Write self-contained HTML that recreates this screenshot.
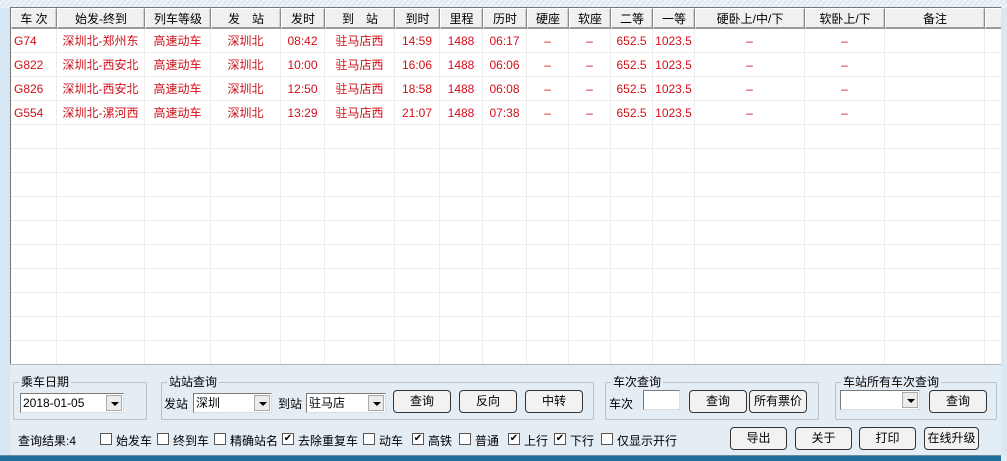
<!DOCTYPE html><html><head><meta charset="utf-8"><style>
*{margin:0;padding:0;box-sizing:border-box}
body{width:1007px;height:461px;overflow:hidden;position:relative;background:#e4ecf4;font-family:"Liberation Sans","Noto Sans CJK SC",sans-serif;font-size:12px;color:#000}
.a{position:absolute}
#top{left:0;top:0;width:1007px;height:8px;background:repeating-linear-gradient(135deg,#dfe9f3 0 2px,#eef4fa 2px 4px)}
#grid{left:10px;top:7px;width:991px;height:358px;background:#fff;border-left:1px solid #777;border-top:1px solid #777;overflow:hidden}
table{border-collapse:separate;border-spacing:0;table-layout:fixed;position:absolute;left:0;top:0;width:991px}
th{height:21px;background:#f0f0f0;font-weight:normal;border-right:1px solid #8a8a8a;border-bottom:2px solid #9a9a9a;border-left:1px solid #fff;border-top:1px solid #fff;font-size:12px;padding:0;box-shadow:inset -1px 0 0 #d0d0d0}
td{height:24px;border-right:1px solid #ececec;border-bottom:1px solid #ececec;text-align:center;color:#d0101a;padding:0;white-space:nowrap}
td.l{text-align:left;padding-left:3px}
fieldset{position:absolute;border:1px solid #b8c2cc;border-radius:2px}
.lg{position:absolute;background:#e4ecf4;padding:0 2px;font-size:12px;line-height:13px}
.cb{position:absolute;height:20px;background:#fff;border:1px solid #7a7a7a;border-right-color:#ddd;border-bottom-color:#ddd;font-size:12px;line-height:18px;padding-left:2px}
.cb i{position:absolute;right:1px;top:1px;width:16px;height:16px;background:#ececec;border:1px solid #aaa}
.cb i:after{content:"";position:absolute;left:4px;top:6px;border-left:4px solid transparent;border-right:4px solid transparent;border-top:4px solid #000}
.bt{position:absolute;height:23px;border:1px solid #333;border-radius:4px;background:#f2f2f2;text-align:center;line-height:21px;font-size:12px}
.ck{position:absolute;top:433px;width:12px;height:12px;border:1px solid #555;background:#fff;font-size:10px;line-height:10px;text-align:center}
.t{position:absolute;font-size:12px;white-space:nowrap}
</style></head><body>
<div class="a" id="top"></div>
<div class="a" style="left:0;top:8px;width:10px;height:447px;background:#d6e6f2"></div>
<div class="a" style="left:1001px;top:8px;width:6px;height:447px;background:#dbe7f1"></div>
<div class="a" id="grid">
<table>
<colgroup><col style="width:46px"><col style="width:88px"><col style="width:66px"><col style="width:70px"><col style="width:44px"><col style="width:70px"><col style="width:45px"><col style="width:43px"><col style="width:44px"><col style="width:42px"><col style="width:42px"><col style="width:42px"><col style="width:42px"><col style="width:110px"><col style="width:80px"><col style="width:100px"><col style="width:17px"></colgroup>
<tr><th>车 次</th><th>始发-终到</th><th>列车等级</th><th>发　站</th><th>发时</th><th>到　站</th><th>到时</th><th>里程</th><th>历时</th><th>硬座</th><th>软座</th><th>二等</th><th>一等</th><th>硬卧上/中/下</th><th>软卧上/下</th><th>备注</th><th style="border-right:0;box-shadow:none"></th></tr>
<tr><td class="l">G74</td><td>深圳北-郑州东</td><td>高速动车</td><td>深圳北</td><td>08:42</td><td>驻马店西</td><td>14:59</td><td>1488</td><td>06:17</td><td>–</td><td>–</td><td>652.5</td><td>1023.5</td><td>–</td><td>–</td><td></td><td></td></tr>
<tr><td class="l">G822</td><td>深圳北-西安北</td><td>高速动车</td><td>深圳北</td><td>10:00</td><td>驻马店西</td><td>16:06</td><td>1488</td><td>06:06</td><td>–</td><td>–</td><td>652.5</td><td>1023.5</td><td>–</td><td>–</td><td></td><td></td></tr>
<tr><td class="l">G826</td><td>深圳北-西安北</td><td>高速动车</td><td>深圳北</td><td>12:50</td><td>驻马店西</td><td>18:58</td><td>1488</td><td>06:08</td><td>–</td><td>–</td><td>652.5</td><td>1023.5</td><td>–</td><td>–</td><td></td><td></td></tr>
<tr><td class="l">G554</td><td>深圳北-漯河西</td><td>高速动车</td><td>深圳北</td><td>13:29</td><td>驻马店西</td><td>21:07</td><td>1488</td><td>07:38</td><td>–</td><td>–</td><td>652.5</td><td>1023.5</td><td>–</td><td>–</td><td></td><td></td></tr>
<tr><td></td><td></td><td></td><td></td><td></td><td></td><td></td><td></td><td></td><td></td><td></td><td></td><td></td><td></td><td></td><td></td><td></td></tr>
<tr><td></td><td></td><td></td><td></td><td></td><td></td><td></td><td></td><td></td><td></td><td></td><td></td><td></td><td></td><td></td><td></td><td></td></tr>
<tr><td></td><td></td><td></td><td></td><td></td><td></td><td></td><td></td><td></td><td></td><td></td><td></td><td></td><td></td><td></td><td></td><td></td></tr>
<tr><td></td><td></td><td></td><td></td><td></td><td></td><td></td><td></td><td></td><td></td><td></td><td></td><td></td><td></td><td></td><td></td><td></td></tr>
<tr><td></td><td></td><td></td><td></td><td></td><td></td><td></td><td></td><td></td><td></td><td></td><td></td><td></td><td></td><td></td><td></td><td></td></tr>
<tr><td></td><td></td><td></td><td></td><td></td><td></td><td></td><td></td><td></td><td></td><td></td><td></td><td></td><td></td><td></td><td></td><td></td></tr>
<tr><td></td><td></td><td></td><td></td><td></td><td></td><td></td><td></td><td></td><td></td><td></td><td></td><td></td><td></td><td></td><td></td><td></td></tr>
<tr><td></td><td></td><td></td><td></td><td></td><td></td><td></td><td></td><td></td><td></td><td></td><td></td><td></td><td></td><td></td><td></td><td></td></tr>
<tr><td></td><td></td><td></td><td></td><td></td><td></td><td></td><td></td><td></td><td></td><td></td><td></td><td></td><td></td><td></td><td></td><td></td></tr>
<tr><td></td><td></td><td></td><td></td><td></td><td></td><td></td><td></td><td></td><td></td><td></td><td></td><td></td><td></td><td></td><td></td><td></td></tr>
<tr><td></td><td></td><td></td><td></td><td></td><td></td><td></td><td></td><td></td><td></td><td></td><td></td><td></td><td></td><td></td><td></td><td></td></tr>
</table>
</div>
<div class="a" style="left:10px;top:364px;width:991px;height:1px;background:#b0b8c0"></div>

<fieldset style="left:13px;top:382px;width:134px;height:38px"></fieldset>
<div class="lg" style="left:19px;top:376px">乘车日期</div>
<div class="cb" style="left:20px;top:393px;width:104px">2018-01-05<i></i></div>

<fieldset style="left:161px;top:382px;width:433px;height:38px"></fieldset>
<div class="lg" style="left:167px;top:376px">站站查询</div>
<div class="t" style="left:164px;top:395px">发站</div>
<div class="cb" style="left:193px;top:393px;width:79px">深圳<i></i></div>
<div class="t" style="left:278px;top:395px">到站</div>
<div class="cb" style="left:306px;top:393px;width:80px">驻马店<i></i></div>
<div class="bt" style="left:393px;top:390px;width:58px">查询</div>
<div class="bt" style="left:459px;top:390px;width:58px">反向</div>
<div class="bt" style="left:525px;top:390px;width:58px">中转</div>

<fieldset style="left:605px;top:382px;width:214px;height:38px"></fieldset>
<div class="lg" style="left:611px;top:376px">车次查询</div>
<div class="t" style="left:609px;top:395px">车次</div>
<div class="a" style="left:643px;top:390px;width:37px;height:20px;background:#fff;border:1px solid #7a7a7a;border-right-color:#ddd;border-bottom-color:#ddd"></div>
<div class="bt" style="left:689px;top:390px;width:58px">查询</div>
<div class="bt" style="left:749px;top:390px;width:58px">所有票价</div>

<fieldset style="left:835px;top:382px;width:162px;height:38px"></fieldset>
<div class="lg" style="left:841px;top:376px">车站所有车次查询</div>
<div class="cb" style="left:840px;top:390px;width:80px"><i></i></div>
<div class="bt" style="left:929px;top:390px;width:58px">查询</div>

<div class="t" style="left:18px;top:432px">查询结果:4</div>
<div class="ck" style="left:100px"></div><div class="t" style="left:116px;top:432px">始发车</div>
<div class="ck" style="left:157px"></div><div class="t" style="left:173px;top:432px">终到车</div>
<div class="ck" style="left:214px"></div><div class="t" style="left:230px;top:432px">精确站名</div>
<div class="ck" style="left:282px">✔</div><div class="t" style="left:298px;top:432px">去除重复车</div>
<div class="ck" style="left:363px"></div><div class="t" style="left:379px;top:432px">动车</div>
<div class="ck" style="left:412px">✔</div><div class="t" style="left:428px;top:432px">高铁</div>
<div class="ck" style="left:459px"></div><div class="t" style="left:475px;top:432px">普通</div>
<div class="ck" style="left:508px">✔</div><div class="t" style="left:524px;top:432px">上行</div>
<div class="ck" style="left:554px">✔</div><div class="t" style="left:570px;top:432px">下行</div>
<div class="ck" style="left:601px"></div><div class="t" style="left:617px;top:432px">仅显示开行</div>

<div class="bt" style="left:730px;top:427px;width:57px">导出</div>
<div class="bt" style="left:795px;top:427px;width:57px">关于</div>
<div class="bt" style="left:859px;top:427px;width:57px">打印</div>
<div class="bt" style="left:924px;top:427px;width:55px">在线升级</div>

<div class="a" style="left:0;top:455px;width:1001px;height:6px;background:#1f6e99;border-top:1px solid #6a8aa0"></div>
</body></html>
